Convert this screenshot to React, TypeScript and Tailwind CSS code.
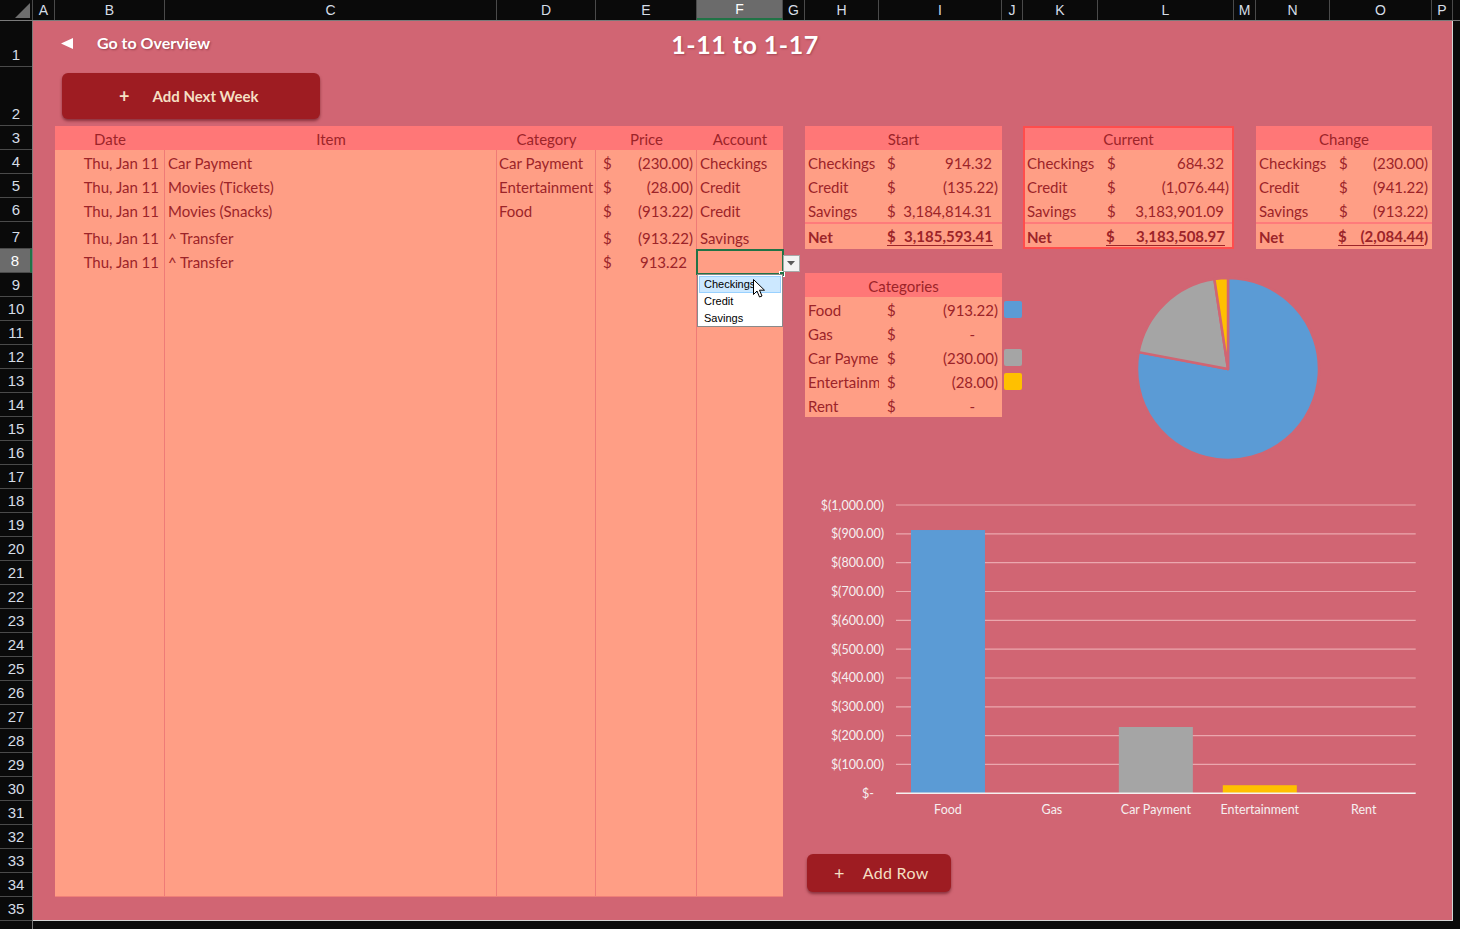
import React from "react";

const RED = "text-[#9c2429]";

const colHeads: { l: string; w: string; sel?: boolean }[] = [
  { l: "A", w: "w-[22px]" },
  { l: "B", w: "w-[110px]" },
  { l: "C", w: "w-[332px]" },
  { l: "D", w: "w-[99px]" },
  { l: "E", w: "w-[101px]" },
  { l: "F", w: "w-[86px]", sel: true },
  { l: "G", w: "w-[22px]" },
  { l: "H", w: "w-[74px]" },
  { l: "I", w: "w-[123px]" },
  { l: "J", w: "w-[21px]" },
  { l: "K", w: "w-[75px]" },
  { l: "L", w: "w-[136px]" },
  { l: "M", w: "w-[22px]" },
  { l: "N", w: "w-[74px]" },
  { l: "O", w: "w-[102px]" },
  { l: "P", w: "w-[21px]" },
];

const rowHeights: string[] = [
  "h-[46px]",
  "h-[59px]",
  "h-[24px]",
  "h-[24px]",
  "h-[24px]",
  "h-[24px]",
  "h-[27px]",
  ...Array.from({ length: 28 }, () => "h-[24px]"),
];

function ColumnHeader() {
  return (
    <div className="flex h-[21px] shrink-0 border-b border-[#7a7a7a] bg-[#0a0a0a] [font-family:Liberation_Sans,Arial,sans-serif]">
      <div className="relative w-[33px] h-full border-r border-[#4a4a4a]">
        <svg className="absolute left-0 top-0" width="33" height="20">
          <polygon points="15,18 30,3 30,18" fill="#6e6e6e" />
        </svg>
      </div>
      {colHeads.map((c) => (
        <div
          key={c.l}
          className={`${c.w} h-full flex items-center justify-center border-r border-[#4a4a4a] text-[14px] ${
            c.sel ? "bg-[#6b6b6b] text-white border-b-2 border-b-[#217346]" : "text-[#d5dde6]"
          }`}
        >
          {c.l}
        </div>
      ))}
      <div className="flex-1" />
    </div>
  );
}

function RowHeader() {
  return (
    <div className="w-[33px] shrink-0 flex flex-col border-r border-[#7a7a7a] [font-family:Liberation_Sans,Arial,sans-serif]">
      {rowHeights.map((h, i) => (
        <div
          key={i}
          className={`${h} shrink-0 flex items-end justify-center border-b border-[#4a4a4a] text-[15px] leading-[23px] ${
            i === 7 ? "bg-[#6b6b6b] text-white border-r-2 border-r-[#217346]" : "text-[#d5dde6]"
          }`}
        >
          {i + 1}
        </div>
      ))}
    </div>
  );
}

function Acct({ v, dollar, pos, neg }: { v: string; dollar: string; pos: string; neg: string }) {
  const isNeg = v.startsWith("(");
  const isDash = v === "-";
  return (
    <div className="flex flex-1 items-end justify-between">
      <span className={dollar}>$</span>
      <span className={isDash ? "pr-[27px]" : isNeg ? neg : pos}>{v}</span>
    </div>
  );
}

const mainRows: { h: string; c: string[] }[] = [
  { h: "h-[24px]", c: ["Thu, Jan 11", "Car Payment", "Car Payment", "(230.00)", "Checkings"] },
  { h: "h-[24px]", c: ["Thu, Jan 11", "Movies (Tickets)", "Entertainment", "(28.00)", "Credit"] },
  { h: "h-[24px]", c: ["Thu, Jan 11", "Movies (Snacks)", "Food", "(913.22)", "Credit"] },
  { h: "h-[27px]", c: ["Thu, Jan 11", "^ Transfer", "", "(913.22)", "Savings"] },
  { h: "h-[24px]", c: ["Thu, Jan 11", "^ Transfer", "", "913.22", ""] },
];

const SEP = "border-r border-[#ef7b77]";

function MainTable() {
  return (
    <div className={`col-[2/7] row-[3/35] flex flex-col text-[15px] ${RED}`}>
      <div className="flex h-[24px] shrink-0 bg-[#ff7777] items-end pb-[1px] leading-[20px]">
        <div className="w-[110px] text-center">Date</div>
        <div className="w-[332px] text-center">Item</div>
        <div className="w-[99px] text-center">Category</div>
        <div className="w-[101px] text-center">Price</div>
        <div className="w-[86px] text-center">Account</div>
      </div>
      {mainRows.map((r, i) => (
        <div key={i} className={`${r.h} shrink-0 flex bg-[#ff9e85] leading-[20px]`}>
          <div className={`w-[110px] ${SEP} flex items-end justify-end pb-[1px] pr-[5px] whitespace-nowrap`}>{r.c[0]}</div>
          <div className={`w-[332px] ${SEP} flex items-end pb-[1px] pl-[3px] whitespace-nowrap`}>{r.c[1]}</div>
          <div className={`w-[99px] ${SEP} flex items-end pb-[1px] pl-[2px] whitespace-nowrap overflow-hidden`}>{r.c[2]}</div>
          <div className={`w-[101px] ${SEP} flex items-end pb-[1px]`}>
            <Acct v={r.c[3]} dollar="pl-[7px]" pos="pr-[9px]" neg="pr-[3px]" />
          </div>
          <div className="w-[86px] flex items-end pb-[1px] pl-[3px] whitespace-nowrap">{r.c[4]}</div>
        </div>
      ))}
      <div className="flex flex-1 bg-[#ff9e85] border-b border-[#f08078]">
        <div className={`w-[110px] ${SEP}`} />
        <div className={`w-[332px] ${SEP}`} />
        <div className={`w-[99px] ${SEP}`} />
        <div className={`w-[101px] ${SEP}`} />
        <div className="w-[86px]" />
      </div>
    </div>
  );
}

function DropDown() {
  return (
    <div className="col-[6/8] row-[8/12] relative z-10">
      <div className="absolute left-[-1px] top-0 w-[88px] h-[26px] border-2 border-[#217346]" />
      <div className="absolute left-[82px] top-[22px] w-[6px] h-[6px] bg-[#217346] border border-white" />
      <div className="absolute left-[86px] top-[6px] w-[17px] h-[17px] bg-[#f3f3f3] border border-[#a8a8a8] flex items-center justify-center">
        <svg width="9" height="5">
          <polygon points="0,0 8,0 4,4.5" fill="#5a5a5a" />
        </svg>
      </div>
      <div className="absolute left-0 top-[25px] w-[86px] h-[53px] bg-white border border-[#8a8a8a] p-[1px] text-[11px] text-black [font-family:Liberation_Sans,Arial,sans-serif]">
        <div className="h-[17px] leading-[15px] pl-[4px] bg-[#cce8ff] border border-[#99d1ff]">Checkings</div>
        <div className="h-[17px] leading-[17px] pl-[5px]">Credit</div>
        <div className="h-[17px] leading-[17px] pl-[5px]">Savings</div>
      </div>
      <svg className="absolute left-[56px] top-[30px]" width="13" height="20" viewBox="0 0 13 20">
        <path d="M0.5,0.5 L0.5,15.5 L4,12 L6.5,18 L9,17 L6.5,11.2 L11.5,11.2 Z" fill="white" stroke="black" strokeWidth="1" strokeLinejoin="round" />
      </svg>
    </div>
  );
}

type SumProps = {
  area: string;
  title: string;
  rows: [string, string][];
  bordered?: boolean;
  labelW: string;
  labelPad: string;
  dollar: string;
  pos: string;
  neg: string;
  net?: React.ReactNode;
};

function SumTable({ area, title, rows, bordered, labelW, labelPad, dollar, pos, neg, net }: SumProps) {
  return (
    <div className={`${area} flex flex-col text-[15px] ${RED} ${bordered ? "border-2 border-[#ff4d4d]" : ""}`}>
      <div
        className={`${bordered ? "h-[22px]" : "h-[24px]"} shrink-0 bg-[#ff7777] flex items-end justify-center pb-[1px] leading-[20px]`}
      >
        {title}
      </div>
      {rows.map(([l, v]) => (
        <div key={l} className="h-[24px] shrink-0 flex items-end pb-[1px] leading-[20px] bg-[#ff9e85]">
          <div className={`${labelW} ${labelPad} shrink-0 overflow-hidden whitespace-nowrap`}>{l}</div>
          <Acct v={v} dollar={dollar} pos={pos} neg={neg} />
        </div>
      ))}
      {net && (
        <div
          className={`${bordered ? "h-[25px] pb-[1px]" : "h-[27px] pb-[3px]"} shrink-0 flex items-end bg-[#ff9e85] border-t-2 border-[#ff7b7b] font-bold`}
        >
          <div className={`${labelW} ${labelPad} shrink-0 leading-[18px]`}>Net</div>
          {net}
        </div>
      )}
    </div>
  );
}

function Pie() {
  return (
    <div className="col-[11/15] row-[9/17]">
      <svg width="307" height="192" viewBox="0 0 307 192">
        <path d="M205,96 L205,5 A91,91 0 1 1 115.58,79.11 Z" fill="#5b9bd5" stroke="#d16573" strokeWidth="2.5" strokeLinejoin="round" />
        <path d="M205,96 L115.58,79.11 A91,91 0 0 1 191.39,6.02 Z" fill="#a5a5a5" stroke="#d16573" strokeWidth="2.5" strokeLinejoin="round" />
        <path d="M205,96 L191.39,6.02 A91,91 0 0 1 205,5 Z" fill="#ffc000" stroke="#d16573" strokeWidth="2.5" strokeLinejoin="round" />
      </svg>
    </div>
  );
}

function BarChart() {
  const base = 304.3;
  const step = 28.83;
  const ticks = [
    "$(1,000.00)",
    "$(900.00)",
    "$(800.00)",
    "$(700.00)",
    "$(600.00)",
    "$(500.00)",
    "$(400.00)",
    "$(300.00)",
    "$(200.00)",
    "$(100.00)",
  ];
  const cats: [string, number, string][] = [
    ["Food", 913.22, "#5b9bd5"],
    ["Gas", 0, "#a5a5a5"],
    ["Car Payment", 230, "#a5a5a5"],
    ["Entertainment", 28, "#ffc000"],
    ["Rent", 0, "#a5a5a5"],
  ];
  const x0 = 91;
  const slot = 103.94;
  const k = step / 100;
  return (
    <div className="col-[8/16] row-[18/32]">
      <svg width="627" height="336" viewBox="0 0 627 336" fontFamily="Lato, Noto Sans, sans-serif" fontSize="12.5">
        {ticks.map((t, i) => {
          const y = 16 + i * step;
          return (
            <g key={t}>
              <line x1={x0} x2={610.7} y1={y} y2={y} stroke="#eba7ae" strokeWidth="1.2" />
              <text x={79} y={y + 4.5} textAnchor="end" fill="#f6f0f0">
                {t}
              </text>
            </g>
          );
        })}
        <text x={69} y={base + 4.5} textAnchor="end" fill="#f6f0f0">
          $-
        </text>
        {cats.map(([name, v, color], i) => {
          const cx = x0 + slot / 2 + i * slot;
          const h = v * k;
          return (
            <g key={name}>
              {v > 0 && <rect x={cx - 37} y={base - h} width={74} height={h} fill={color} />}
              <text x={cx} y={325} textAnchor="middle" fill="#f6f0f0">
                {name}
              </text>
            </g>
          );
        })}
        <line x1={x0} x2={610.7} y1={base} y2={base} stroke="#f6f0f0" strokeWidth="1.5" />
      </svg>
    </div>
  );
}

export default function App() {
  return (
    <div className="w-[1460px] h-[929px] overflow-hidden bg-[#0a0a0a] flex flex-col [font-family:Lato,Noto_Sans,sans-serif]">
      <ColumnHeader />
      <div className="flex h-[908px]">
        <RowHeader />
        <div className="grid w-[1427px] h-[908px] grid-cols-[22px_110px_332px_99px_101px_86px_22px_74px_123px_21px_75px_136px_22px_74px_102px_21px_7px] grid-rows-[46px_59px_24px_24px_24px_24px_27px_repeat(28,24px)_8px]">
          <div className="col-[1/17] row-[1/36] bg-[#d16573] border-r border-b border-[#d4d4d4]" />

          {/* Row 1: back link */}
          <div className="col-[2/4] row-[1/2] flex items-center pl-[6px] pb-[2px]">
            <svg width="12" height="11" viewBox="0 0 12 11">
              <polygon points="0,5.5 12,0 12,11" fill="white" />
            </svg>
            <span className="ml-[24px] text-[16px] font-bold text-white [text-shadow:1px_1px_2px_rgba(90,20,30,0.45)]">
              Go to Overview
            </span>
          </div>

          {/* Title */}
          <div className="col-[4/10] row-[1/2] flex items-center justify-center pr-[9px] pt-[2px]">
            <span className="text-[25px] font-bold text-white tracking-[0.5px] [text-shadow:1px_1px_2px_rgba(90,20,30,0.35)]">
              1-11 to 1-17
            </span>
          </div>

          {/* Add Next Week button */}
          <div className="col-[2/4] row-[2/3] pl-[7px] pt-[6px]">
            <div className="w-[258px] h-[46px] rounded-[6px] bg-[#9e1c22] shadow-[0_2px_3px_rgba(70,0,10,0.5)] flex items-center pl-[57px] text-[15px] font-bold text-[#f5dfc3]">
              <span className="text-[18px] leading-none">+</span>
              <span className="ml-[23px]">Add Next Week</span>
            </div>
          </div>

          <MainTable />
          <DropDown />

          <SumTable
            area="col-[8/10] row-[3/8]"
            title="Start"
            rows={[
              ["Checkings", "914.32"],
              ["Credit", "(135.22)"],
              ["Savings", "3,184,814.31"],
            ]}
            labelW="w-[74px]"
            labelPad="pl-[3px]"
            dollar="pl-[8px]"
            pos="pr-[10px]"
            neg="pr-[4px]"
            net={
              <div className="flex-1 ml-[8px] mr-[9px] flex justify-between leading-[18px] border-b-[1.5px] border-[#9c2429]">
                <span>$</span>
                <span>3,185,593.41</span>
              </div>
            }
          />

          <SumTable
            area="col-[11/13] row-[3/8]"
            title="Current"
            bordered
            rows={[
              ["Checkings", "684.32"],
              ["Credit", "(1,076.44)"],
              ["Savings", "3,183,901.09"],
            ]}
            labelW="w-[73px]"
            labelPad="pl-[2px]"
            dollar="pl-[9px]"
            pos="pr-[8px]"
            neg="pr-[3px]"
            net={
              <div className="flex-1 ml-[8px] mr-[7px] flex justify-between leading-[18px] border-b-[1.5px] border-[#9c2429]">
                <span>$</span>
                <span>3,183,508.97</span>
              </div>
            }
          />

          <SumTable
            area="col-[14/16] row-[3/8]"
            title="Change"
            rows={[
              ["Checkings", "(230.00)"],
              ["Credit", "(941.22)"],
              ["Savings", "(913.22)"],
            ]}
            labelW="w-[74px]"
            labelPad="pl-[3px]"
            dollar="pl-[9px]"
            pos="pr-[10px]"
            neg="pr-[4px]"
            net={
              <div className="flex-1 flex items-end leading-[18px] pr-[4px]">
                <div className="flex-1 ml-[8px] flex justify-between border-b-[1.5px] border-[#9c2429]">
                  <span>$</span>
                  <span>(2,084.44</span>
                </div>
                <span>)</span>
              </div>
            }
          />

          <SumTable
            area="col-[8/10] row-[9/15]"
            title="Categories"
            rows={[
              ["Food", "(913.22)"],
              ["Gas", "-"],
              ["Car Payment", "(230.00)"],
              ["Entertainment", "(28.00)"],
              ["Rent", "-"],
            ]}
            labelW="w-[74px]"
            labelPad="pl-[3px]"
            dollar="pl-[8px]"
            pos="pr-[10px]"
            neg="pr-[4px]"
          />

          <div className="col-[10/11] row-[10/11] pl-[2px] pt-[4px]">
            <div className="w-[18px] h-[17px] rounded-[2px] bg-[#5b9bd5]" />
          </div>
          <div className="col-[10/11] row-[12/13] pl-[2px] pt-[4px]">
            <div className="w-[18px] h-[17px] rounded-[2px] bg-[#a5a5a5]" />
          </div>
          <div className="col-[10/11] row-[13/14] pl-[2px] pt-[4px]">
            <div className="w-[18px] h-[17px] rounded-[2px] bg-[#ffc000]" />
          </div>

          <Pie />
          <BarChart />

          {/* Add Row button */}
          <div className="col-[8/10] row-[33/35] pl-[2px] pt-[5px]">
            <div className="w-[144px] h-[38px] rounded-[6px] bg-[#9e1c22] shadow-[0_2px_3px_rgba(70,0,10,0.5)] flex items-center pl-[27px] text-[16px] text-[#f5dfc3] tracking-[0.3px]">
              <span className="text-[18px] leading-none">+</span>
              <span className="ml-[18px]">Add Row</span>
            </div>
          </div>
        </div>
      </div>
    </div>
  );
}
